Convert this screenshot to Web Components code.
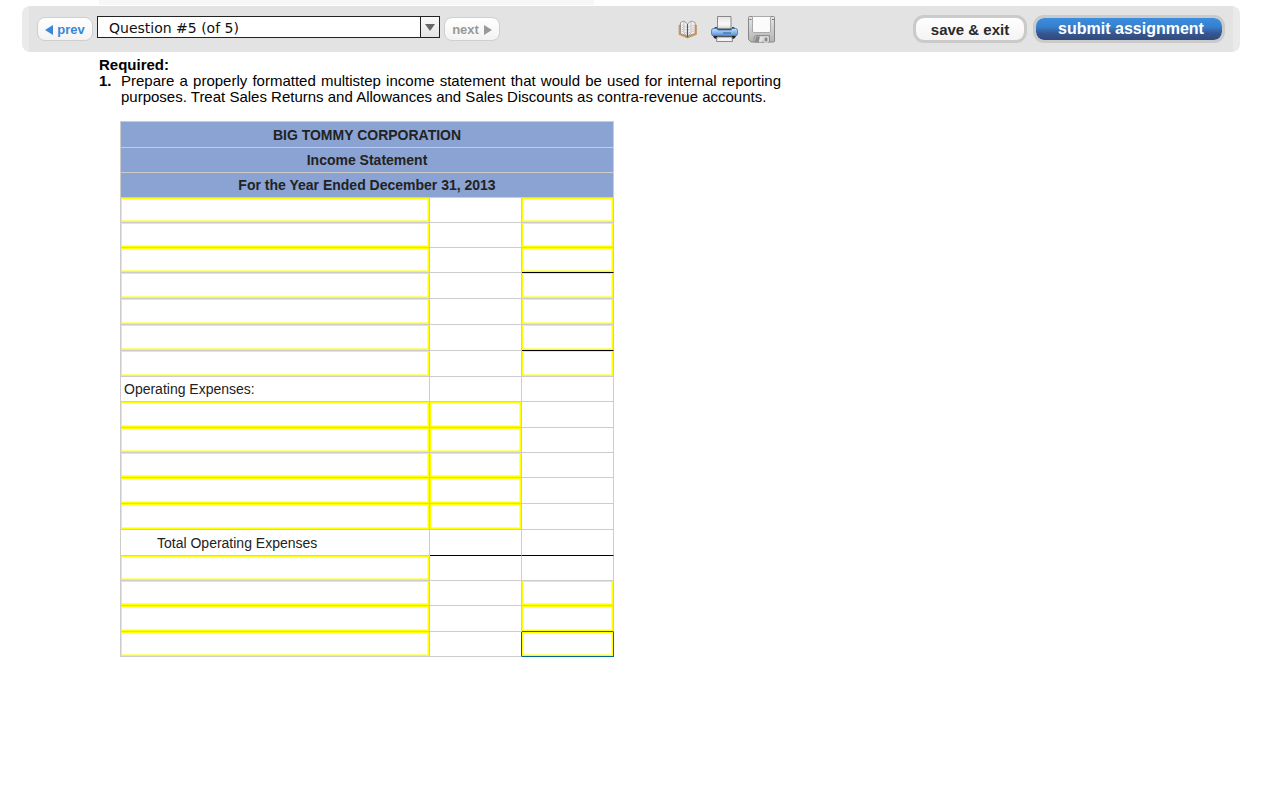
<!DOCTYPE html>
<html lang="en">
<head>
<meta charset="utf-8">
<meta name="viewport" content="width=device-width, initial-scale=1">
<title>Question #5 (of 5)</title>
<style>
body { margin: 0; background: #fff; color: #000; font-family: "Liberation Sans", Arial, sans-serif; }
</style>
</head>
<body>
<assignment-page>
  <assignment-toolbar slot="toolbar"></assignment-toolbar>
  <question-text>
    <span slot="title">Required:</span>
    <span slot="number">1.</span>
    Prepare a properly formatted multistep income statement that would be used for internal reporting purposes. Treat Sales Returns and Allowances and Sales Discounts as contra-revenue accounts.
  </question-text>
  <income-statement></income-statement>
</assignment-page>

<script>
class BaseElement extends HTMLElement {
  constructor() {
    super();
    const t = document.createElement('template');
    t.innerHTML = '<style>*{box-sizing:border-box}' + this.constructor.styles + '</style>' + this.constructor.markup();
    this.attachShadow({ mode: 'open' }).append(t.content.cloneNode(true));
  }
}

customElements.define('assignment-page', class extends BaseElement {
  static styles = `
    :host { display: block; }
    .strip { height: 5px; width: 495px; margin: 0 0 1px 99px; background: #f7f7f7; }
    main { padding: 5px 24px 24px 99px; }`;
  static markup() {
    return `<div class="strip"></div><slot name="toolbar"></slot><main><slot></slot></main>`;
  }
});

customElements.define('nav-button', class extends BaseElement {
  static styles = `
    :host { display: block; color: #3a87d8; }
    :host([muted]) { color: #999; }
    button { display: flex; align-items: center; justify-content: center; gap: 4px; width: 56px; height: 24px;
      padding: 1px 0 0; border: 1px solid #cfcfcf; border-radius: 8px; background: linear-gradient(#fff, #f3f3f3);
      color: inherit; font: bold 13px/16px "Liberation Sans", Arial, sans-serif; }
    svg { width: 8px; height: 10px; fill: currentColor; }
    :host([muted]) button { flex-direction: row-reverse; gap: 5px; }
    :host([muted]) svg { transform: scaleX(-1); }`;
  static markup() {
    return `<button type="button"><svg viewBox="0 0 8 10" aria-hidden="true"><path d="M8 0v10L0 5z"/></svg><slot></slot></button>`;
  }
});

customElements.define('question-picker', class extends BaseElement {
  static styles = `
    :host { display: block; }
    div { display: flex; width: 343px; height: 22px; border: 1px solid #222; background: #fff; }
    select { appearance: none; flex: 1; min-width: 0; margin: 0; padding: 2px 0 0 11px; border: 0; background: none;
      color: #111; font: 14px/18px "DejaVu Sans", Verdana, sans-serif; }
    span { width: 19px; display: grid; place-items: center; border-left: 1px solid #222;
      background: linear-gradient(#fafafa, #e2e5e5); }`;
  static markup() {
    return `<div><select aria-label="Question"><option>Question #5 (of 5)</option></select>
      <span><svg width="10" height="7" viewBox="0 0 10 7" aria-hidden="true"><path d="M0 0h10L5 7z" fill="#666"/></svg></span></div>`;
  }
});

customElements.define('tool-icons', class extends BaseElement {
  static styles = `
    :host { display: flex; align-items: center; gap: 10px; }
    button { display: grid; place-items: center; width: 27px; border: 0; padding: 0; background: none; }
    svg { display: block; }`;
  static markup() {
    return `
    <button type="button" aria-label="Book"><svg width="20" height="20" viewBox="0 0 20 20">
      <path d="M1 5v9.500l6 2.500q2 2 5 0l6.500-2.500V5z" fill="#e9973a" stroke="#c08a55" stroke-width=".6"/>
      <path d="M2.500 2.500L6 1l3.500 3L13 1l4 1.500v11L11 15.500 9.500 18 8 15.500l-5.500-2z" fill="#f6f6f6" stroke="#888" stroke-width=".8"/>
      <path d="M9.500 4v13" stroke="#555" stroke-width="1.200"/>
      <path d="M6 2v11l3 3M13 2v11l-3 3" fill="none" stroke="#999" stroke-width=".7"/>
      <path d="M3.500 5l2 1M3.500 7l2 1M3.500 9l2 1M3.500 11l2 1M7 6l2 1.500M7 9l2 1.500M7 12l2 1.500M12 6l-2 1.500M12 9l-2 1.500M12 12l-2 1.500M16 5l-2 1M16 7l-2 1M16 9l-2 1M16 11l-2 1" stroke="#bbb" stroke-width=".8"/>
    </svg></button>
    <button type="button" aria-label="Print"><svg width="27" height="27" viewBox="0 0 27 27">
      <defs><linearGradient id="pb" x2="0" y2="1"><stop stop-color="#c5e0fa"/><stop offset=".5" stop-color="#8dbcf0"/><stop offset="1" stop-color="#5088d4"/></linearGradient>
      <linearGradient id="pp" x2="0" y2="1"><stop stop-color="#e4e4e4"/><stop offset=".6" stop-color="#fafafa"/><stop offset="1" stop-color="#ccc"/></linearGradient></defs>
      <path d="M6.500 .5h13.500v13H6.500z" fill="url(#pp)" stroke="#888"/>
      <path d="M4 11h2v1.500h15V11h2l2 3H2z" fill="#444"/>
      <path d="M.5 14.500q0-2 2-2h3l1.500 1.500h13l1.500-1.500h3q2 0 2 2v3q0 2.500-2.500 2.500H3Q.5 20 .5 17.500z" fill="url(#pb)" stroke="#3f6fae" stroke-width=".8"/>
      <path d="M2 20h23q-1 3-3 3H5q-2 0-3-3z" fill="#222"/>
      <path d="M6 21h15l.5 4.500h-16z" fill="#f4f4f4" stroke="#888"/>
      <path d="M12 17h8" stroke="#2d5d9e"/><path d="M22.500 16h2" stroke="#68ce68"/>
    </svg></button>
    <button type="button" aria-label="Save"><svg width="27" height="27" viewBox="0 0 27 27">
      <defs><linearGradient id="fd" x2="0" y2="1"><stop stop-color="#e6e6e6"/><stop offset="1" stop-color="#b4b4b4"/></linearGradient></defs>
      <path d="M.5 1.500q0-1 1-1h24q1 0 1 1V25q0 1-1 1H3L.5 23.500z" fill="url(#fd)" stroke="#888"/>
      <path d="M4.500 .5h18V15q0 1.500-1.500 1.500H6q-1.500 0-1.500-1.500z" fill="#fbfbfb" stroke="#aaa"/>
      <path d="M1.500 3.500h2M24 3.500h2" stroke="#777"/>
      <path d="M7.500 19.500h14V26H6v-5z" fill="#bdbdbd" stroke="#8f8f8f"/><path d="M8 20.500h4L10.500 26H7z" fill="#8a8a8a"/>
      <path d="M12 20.500h3.500L14 26h-3z" fill="#e2e2e2"/><path d="M16 21h4v5h-4z" fill="#888" stroke="#eee"/>
    </svg></button>`;
  }
});

customElements.define('action-button', class extends BaseElement {
  static styles = `
    :host { display: block; --w: 114px; }
    :host([primary]) { --w: 192px; }
    button { display: block; width: var(--w); height: 28px; padding: 1px 0 0; border: 3px solid #cacaca; border-radius: 11px;
      background: linear-gradient(#fff, #f4f4f4) padding-box; color: #2a2a2a; font: bold 15px/20px "Liberation Sans", Arial, sans-serif; }
    :host([primary]) button { background: linear-gradient(#3b8ee0, #3680cd 40%, #355791 70%, #33497c) padding-box; color: #fff;
      font-size: 16px; padding: 0 0 0 4px; }`;
  static markup() { return `<button type="button"><slot></slot></button>`; }
});

customElements.define('assignment-toolbar', class extends BaseElement {
  static styles = `
    :host { display: block; margin: 0 40px 0 22px; }
    header { display: flex; align-items: flex-start; min-height: 46px; padding: 9px 15px 8px; border-radius: 8px;
      background: linear-gradient(90deg, #eaeaea 7px, #e3e3e3 7px, #e3e3e3 calc(100% - 7px), #eaeaea calc(100% - 7px)); }
    nav { display: flex; gap: 4px; }
    nav nav-button { margin-top: 2px; }
    nav question-picker { margin-top: 1px; }
    tool-icons { margin: 1px auto 0 174px; }
    .actions { display: flex; gap: 6px; }`;
  static markup() {
    return `<header>
      <nav><nav-button>prev</nav-button><question-picker></question-picker><nav-button muted>next</nav-button></nav>
      <tool-icons></tool-icons>
      <div class="actions"><action-button>save &amp; exit</action-button><action-button primary>submit assignment</action-button></div>
    </header>`;
  }
});

customElements.define('question-text', class extends BaseElement {
  static styles = `
    :host { display: block; max-width: 682px; font-size: 15px; line-height: 16px; }
    .title, .num { font-weight: bold; }
    .row { display: grid; grid-template-columns: 22px 1fr; }
    p { margin: 0; text-align: justify; }`;
  static markup() {
    return `<div class="title"><slot name="title"></slot></div>
      <div class="row"><span class="num"><slot name="number"></slot></span><p><slot></slot></p></div>`;
  }
});

// Each row: tall flag, then the three cells. "i" is an entry field, "" an empty cell; a suffix names the rule below or beside it.
const ROWS = [
  [0, 'i', '', 'i'], [0, 'i', '', 'i'], [0, 'i', '', 'i black'],
  [1, 'i', '', 'i'], [1, 'i', '', 'i'], [1, 'i', '', 'i black'], [1, 'i', '', 'i'],
  [0, 'Operating Expenses:', '', ''],
  [1, 'i', 'i', ''], [0, 'i', 'i', ''], [0, 'i', 'i', ''], [1, 'i', 'i', ''], [1, 'i', 'i', ''],
  [1, 'Total Operating Expenses', 'black', 'black'],
  [0, 'i', '', ''], [0, 'i', '', 'i'], [1, 'i', '', 'i blue'], [0, 'i', 'side', 'i blue side']
];

customElements.define('income-statement', class extends BaseElement {
  static styles = `
    :host { display: block; margin: 16px 0 0 21px; }
    table { table-layout: fixed; width: 494px; border-collapse: separate; border-spacing: 0; color: #222;
      border: solid #ccc; border-width: 1px 0 0 1px; font-size: 14px; line-height: 16px; }
    .c1 { width: 309px; } .c2 { width: 92px; }
    th, td { height: 25px; padding: 0; border: solid #ccc; border-width: 0 1px 1px 0; }
    .tall > * { height: 26px; }
    thead th { background: #8aa3d3; font-weight: bold; text-align: center; }
    tbody th { padding-left: 3px; font-weight: normal; text-align: left; }
    tbody th.total { padding-left: 36px; }
    td.black { border-bottom-color: #000; }
    td.blue { border-bottom-color: #069; }
    td.side { border-right-color: #069; }
    input { display: block; width: 100%; height: 24px; margin: 0; padding: 0 3px; border: 1px solid #ff0;
      box-shadow: inset -1px -1px #ffff80; border-radius: 0; outline: 0; background: #fff; font: inherit; }
    .tall input { height: 25px; }`;
  static markup() {
    const cols = ['Account', 'Detail amount', 'Amount'];
    const body = ROWS.map(([tall, ...cells], r) => `<tr${tall ? ' class="tall"' : ''}>` + cells.map((c, i) => {
      if (i === 0 && c !== 'i') return `<th scope="row"${c.startsWith('Total') ? ' class="total"' : ''}>${c}</th>`;
      const parts = c.split(' ');
      const field = parts[0] === 'i' ? `<input type="text" aria-label="${cols[i]}, row ${r + 1}">` : '';
      const cls = parts.filter(p => p && p !== 'i').join(' ');
      return `<td class="${cls}">${field}</td>`;
    }).join('') + '</tr>').join('');
    return `<table><colgroup><col class="c1"><col class="c2"><col class="c2"></colgroup>
      <thead><tr class="tall"><th colspan="3">BIG TOMMY CORPORATION</th></tr><tr><th colspan="3">Income Statement</th></tr>
      <tr><th colspan="3">For the Year Ended December 31, 2013</th></tr></thead><tbody>${body}</tbody></table>`;
  }
});
</script>
</body>
</html>
